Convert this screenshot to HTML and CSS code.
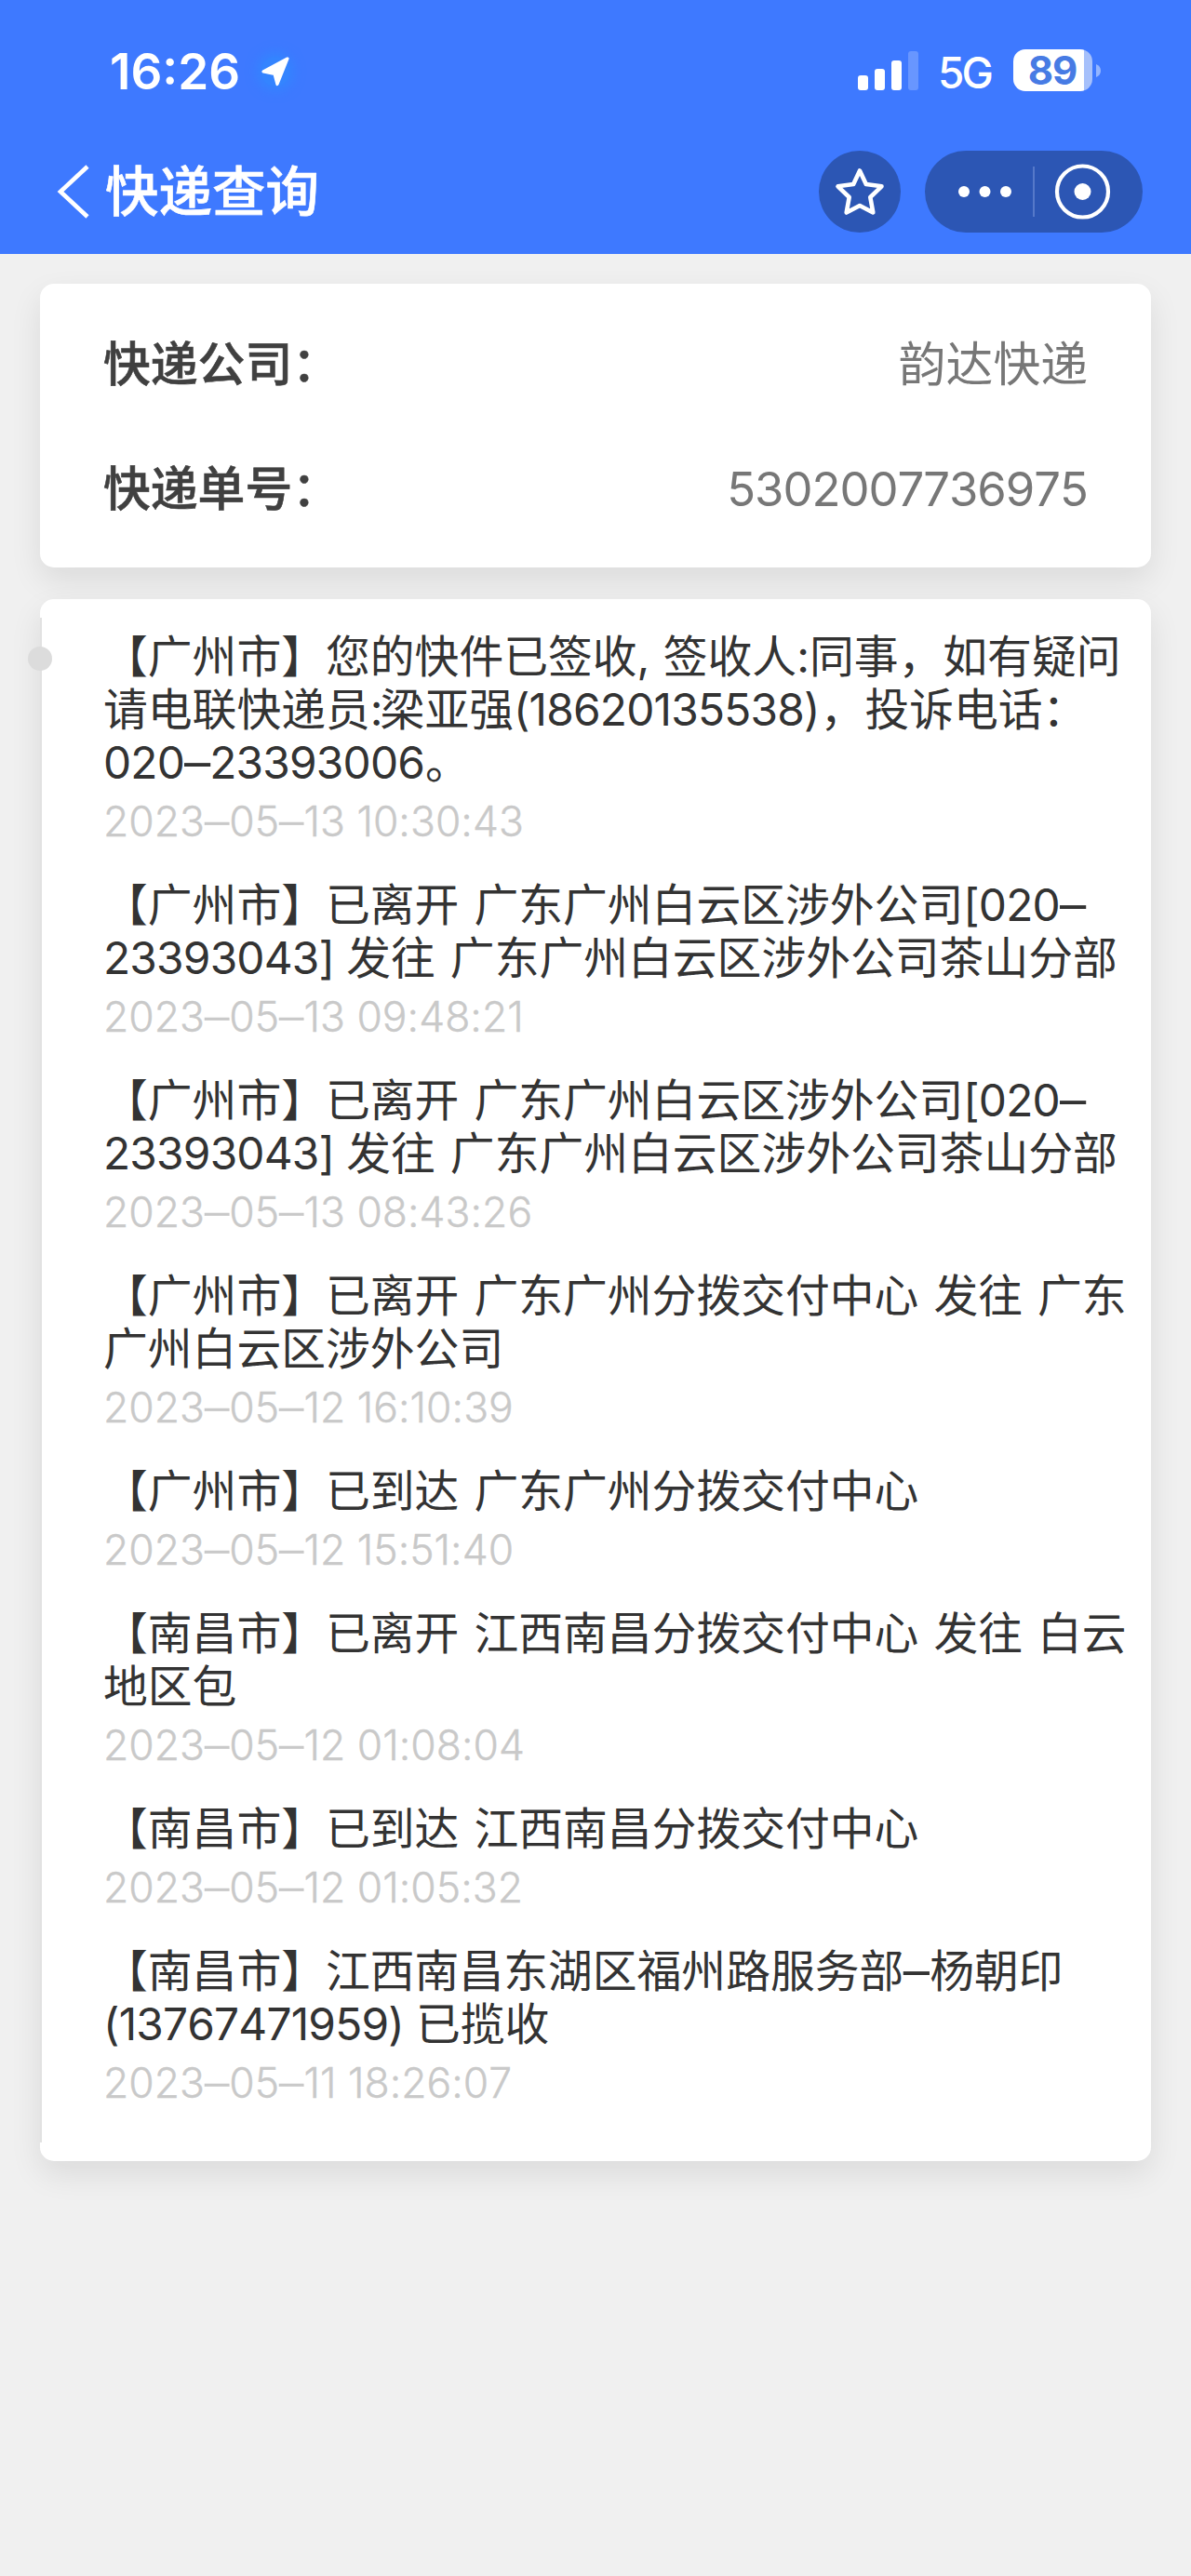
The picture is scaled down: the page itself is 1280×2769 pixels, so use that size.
FILE: index.html
```html
<!DOCTYPE html>
<html lang="zh-CN">
<head>
<meta charset="utf-8">
<title>快递查询</title>
<link rel="stylesheet" href="styles.css">
</head>
<body>
<header class="header">
  <div class="status">
    <div class="status-left">
      <span class="clock">16:26</span>
      <svg class="locate" width="30" height="32" viewBox="0 0 30 32"><path d="M28 2 2 16 14 18.4 17 29.5Z" fill="#fff" stroke="#fff" stroke-width="3.2" stroke-linejoin="round"/></svg>
    </div>
    <div class="status-right">
      <svg width="66" height="42" viewBox="0 0 66 42" fill="#fff"><rect y="26" width="11" height="16" rx="3"/><rect x="18" y="19" width="11" height="23" rx="3"/><rect x="36" y="10" width="11" height="32" rx="3"/><rect x="54" y="0" width="11" height="42" rx="3" opacity=".22"/></svg>
      <span class="network">5G</span>
      <div class="battery"><span class="battery-level">89</span></div>
      <svg class="battery-tip" width="5" height="14" viewBox="0 0 5 14"><path d="M0 0Q5 2 5 7T0 14Z" fill="#94b5ff"/></svg>
    </div>
  </div>
  <nav class="nav">
    <svg class="back" width="36" height="60" viewBox="0 0 36 60"><path d="M34 3 5 30 34 57" fill="none" stroke="#fff" stroke-width="4.6"/></svg>
    <h1 class="title">快递查询</h1>
    <div class="round">
      <svg width="88" height="88" viewBox="0 0 88 88"><path d="M44 21.5 50.8 36 67.5 38.3 55.3 50 58.3 66.5 44 59 29.7 66.5 32.7 50 20.5 38.3 37.2 36Z" fill="none" stroke="#fff" stroke-width="4.6" stroke-linejoin="round"/></svg>
    </div>
    <div class="capsule">
      <svg width="234" height="88" viewBox="0 0 234 88"><g fill="#fff"><circle cx="42" cy="44" r="6"/><circle cx="64.5" cy="44" r="6"/><circle cx="87" cy="44" r="6"/><circle cx="169.5" cy="44" r="9"/></g><path d="M117 17V71" stroke="#5679c9" stroke-width="2"/><circle cx="169.5" cy="44" r="27.5" fill="none" stroke="#fff" stroke-width="4.2"/></svg>
    </div>
  </nav>
</header>
<main class="content">
  <section class="card info">
    <div class="info-row"><span class="label">快递公司：</span><span class="value">韵达快递</span></div>
    <div class="info-row"><span class="label">快递单号：</span><span class="value number">5302007736975</span></div>
  </section>
  <section class="card track">
    <ol class="events">
      <li class="event latest"><p class="text">【广州市】您的快件已签收, 签收人:同事，如有疑问<br>请电联快递员<span class="colon">:</span>梁亚强<span class="num">(18620135538)</span>，投诉电话：<br><span class="num">020<span class="dash">–</span>23393006</span>。</p><time class="time">2023<span class="dash">–</span>05<span class="dash">–</span>13 10:30:43</time></li>
      <li class="event"><p class="text">【广州市】已离开 广东广州白云区涉外公司<span class="num">[020<span class="dash">–</span></span><br><span class="num">23393043]</span> 发往 广东广州白云区涉外公司茶山分部</p><time class="time">2023<span class="dash">–</span>05<span class="dash">–</span>13 09:48:21</time></li>
      <li class="event"><p class="text">【广州市】已离开 广东广州白云区涉外公司<span class="num">[020<span class="dash">–</span></span><br><span class="num">23393043]</span> 发往 广东广州白云区涉外公司茶山分部</p><time class="time">2023<span class="dash">–</span>05<span class="dash">–</span>13 08:43:26</time></li>
      <li class="event"><p class="text">【广州市】已离开 广东广州分拨交付中心 发往 广东<br>广州白云区涉外公司</p><time class="time">2023<span class="dash">–</span>05<span class="dash">–</span>12 16:10:39</time></li>
      <li class="event"><p class="text">【广州市】已到达 广东广州分拨交付中心</p><time class="time">2023<span class="dash">–</span>05<span class="dash">–</span>12 15:51:40</time></li>
      <li class="event"><p class="text">【南昌市】已离开 江西南昌分拨交付中心 发往 白云<br>地区包</p><time class="time">2023<span class="dash">–</span>05<span class="dash">–</span>12 01:08:04</time></li>
      <li class="event"><p class="text">【南昌市】已到达 江西南昌分拨交付中心</p><time class="time">2023<span class="dash">–</span>05<span class="dash">–</span>12 01:05:32</time></li>
      <li class="event"><p class="text">【南昌市】江西南昌东湖区福州路服务部<span class="dash">–</span>杨朝印<br><span class="num">(13767471959)</span> 已揽收</p><time class="time">2023<span class="dash">–</span>05<span class="dash">–</span>11 18:26:07</time></li>
    </ol>
  </section>
</main>
</body>
</html>
```

FILE: styles.css
```css
* { box-sizing: border-box; }
body {
  margin: 0;
  min-height: 2769px;
  background: #f0f0f0;
  color: #333;
  font-family: Inter, "Noto Sans CJK SC", sans-serif;
  font-kerning: none;
  text-spacing-trim: space-all;
}
.header { height: 273px; background: #3e79ff; color: #fff; }
.status { display: flex; justify-content: space-between; height: 154px; padding: 0 97px 0 118px; }
.status-left, .status-right { display: flex; align-items: center; }
.clock { font-size: 53px; font-weight: 600; }
.status-left { gap: 23px; }
.locate { overflow: visible; border-radius: 16px; box-shadow: 0 0 12px 5px #3484ff; background: #3484ff; }
.status-right { height: 151px; }
.network { margin-left: 20px; font-size: 46px; font-weight: 500; width: 62px; line-height: 60px; padding-top: 4px; letter-spacing: -3px; }
.battery {
  display: flex; align-items: center; justify-content: center;
  width: 85px; height: 45px; margin-left: 19px; padding-right: 1px;
  border-radius: 13px;
  background: linear-gradient(90deg, #fff 76px, #a6c0fb 76px);
}
.battery-level { color: #477be4; font-size: 42px; font-weight: 700; line-height: 45px; letter-spacing: -1px; }
.battery-tip { margin-left: 4px; }
.nav { display: flex; align-items: center; height: 104px; padding: 0 52px 0 60px; }
.title { flex: 1; margin: 0 0 0 17px; font-size: 57.5px; font-weight: 500; line-height: 80px; -webkit-text-stroke: .6px #fff; }
.round, .capsule { height: 88px; border-radius: 44px; background: #2c56b4; }
.round { width: 88px; margin-right: 26px; }
.content { display: flex; flex-direction: column; gap: 34px; padding: 32px 43px 0; }
.card { border-radius: 15px; background: #fff; box-shadow: 0 14px 34px rgba(0, 0, 0, .09); }
.info { height: 305px; padding: 54px 68px 0; }
.info-row { display: flex; justify-content: space-between; height: 134px; line-height: 66px; font-size: 50.8px; }
.label { font-weight: 500; color: #404040; -webkit-text-stroke: .6px #404040; }
.value { color: #777; }
.number { letter-spacing: -1px; }
.track { position: relative; height: 1679px; padding: 34px 0 0; }
.track::before { content: ""; position: absolute; left: 0; top: 20px; bottom: 20px; width: 2px; background: #e2e2e2; }
.track::after { content: ""; position: absolute; left: -13px; top: 51px; width: 26px; height: 26px; border-radius: 50%; background: #dcdcdc; }
.events { margin: 0; padding: 0 0 0 68px; list-style: none; }
.event { padding-bottom: 35px; }
.text { margin: 0 0 8px; font-size: 47.8px; line-height: 57px; white-space: nowrap; word-spacing: 2.6px; }
.num { margin-right: -3px; letter-spacing: -.8px; }
.latest .text { word-spacing: 1px; }
.latest .num { margin-right: 1px; }
.colon { letter-spacing: -3px; }
.dash { display: inline-block; margin: 0 2px; transform: scaleX(1.18); }
.time { display: block; color: #c9c9c9; font-size: 44.4px; line-height: 53px; font-weight: 300; letter-spacing: .05px; -webkit-text-stroke: .4px #c9c9c9; }
```
